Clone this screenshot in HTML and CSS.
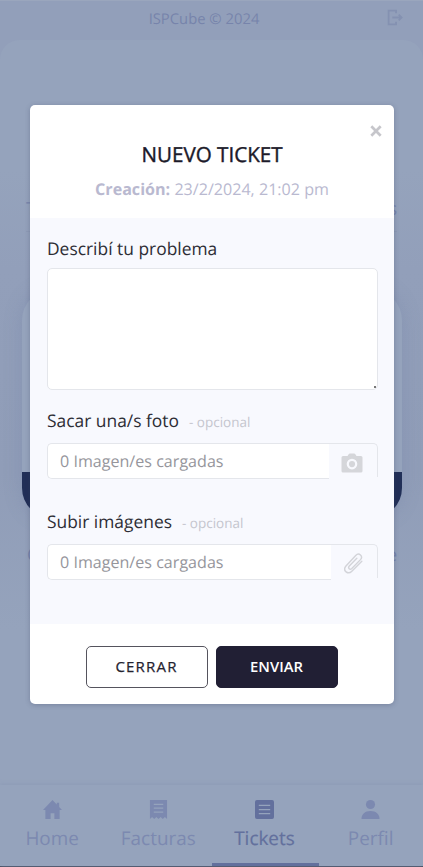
FILE: index.html
```
<!DOCTYPE html>
<html lang="es">
<head>
<meta charset="utf-8">
<title>Nuevo ticket</title>
<link rel="stylesheet" href="styles.css">
</head>
<body>
<div class="app">
  <header class="topbar">
    <span class="brand">ISPCube © 2024</span>
    <svg class="logout" viewBox="0 0 16 16"><path d="M7 1.500H2v13h5M7 1.500h2v2.500M7 14.500h2V12M5.500 8h8.500M11.500 5.300L14.200 8l-2.700 2.700" /></svg>
  </header>
  <main class="page">
    <div class="page-head"><span>T</span><span>s</span></div>
    <section class="summary"><div class="summary-foot"></div></section>
    <div class="page-sub"><span>C</span><span>e</span></div>
  </main>
  <nav class="tabs">
    <a class="tab"><svg viewBox="0 0 20 20"><path d="M10 0L0 10.500h2.500V20H8v-6h4v6h5.500v-9.500H20l-3-3.200V3h-2.500v1.700z"/></svg><span>Home</span></a>
    <a class="tab"><svg viewBox="0 0 20 20"><path fill-rule="evenodd" d="M1 0h18v20l-2.250-2-2.250 2-2.250-2L10 20l-2.250-2-2.250 2-2.250-2L1 20zM5 4v1.300h10V4zM5 8v1.300h10V8zM5 12v1.300h10V12z"/></svg><span>Facturas</span></a>
    <a class="tab active"><svg viewBox="0 0 20 20"><path fill-rule="evenodd" d="M2 0h16a2 2 0 012 2v16a2 2 0 01-2 2H2a2 2 0 01-2-2V2a2 2 0 012-2zM4 5v1.300h12V5zM4 9.400v1.300h12V9.400zM4 13.800v1.300h12v-1.300z"/></svg><span>Tickets</span></a>
    <a class="tab"><svg viewBox="0 0 20 20"><circle cx="10" cy="4.800" r="4.800"/><path d="M.5 20c0-5 3.500-8.500 9.500-8.500s9.500 3.500 9.500 8.500z"/></svg><span>Perfil</span></a>
  </nav>
</div>

<div class="modal">
  <header class="modal-head">
    <svg class="close" viewBox="0 0 12 12"><path d="M1.300 1.300l9.400 9.400M10.700 1.300l-9.400 9.400"/></svg>
    <h1 class="title">NUEVO TICKET</h1>
    <p class="created"><b>Creación:</b> 23/2/2024, 21:02 pm</p>
  </header>
  <div class="modal-body">
    <label class="label">Describí tu problema</label>
    <div class="textarea"><i class="grip"></i></div>
    <div class="label photo"><span>Sacar una/s foto</span><small>- opcional</small></div>
    <div class="upload">
      <div class="value">0 Imagen/es cargadas</div>
      <div class="pick"><svg class="camera" viewBox="0 0 22 20"><path fill-rule="evenodd" d="M7.500 1.500Q8 .5 9 .5h4q1 0 1.500 1L15.500 3H20q1.500 0 1.500 1.500v13.500q0 1.500-1.500 1.500H2Q.5 19.500.5 18V4.500Q.5 3 2 3h4.500zM11 5.800a5.300 5.300 0 100 10.600 5.300 5.300 0 000-10.600zm0 2.200a3.100 3.100 0 110 6.200A3.100 3.100 0 0111 8z"/></svg></div>
    </div>
    <div class="label images"><span>Subir imágenes</span><small>- opcional</small></div>
    <div class="upload files">
      <div class="value">0 Imagen/es cargadas</div>
      <div class="pick"><svg class="clip" viewBox="2 1 17 19"><path d="M18 8.500L9 17.500c-3.500 3.500-8.500-.5-5.500-4.500L12.500 3.200c3-3 7 .6 4.300 3.800l-7.800 8c-1.800 1.700-3.900-.5-2.300-2.200l6.800-7"/></svg></div>
    </div>
  </div>
  <footer class="modal-foot">
    <button class="btn outline">CERRAR</button>
    <button class="btn solid">ENVIAR</button>
  </footer>
</div>
</body>
</html>
```
FILE: styles.css
```
* { box-sizing: border-box; }
body {
  margin: 0;
  width: 423px;
  height: 867px;
  overflow: hidden;
  font-family: "Open Sans", "Noto Sans", sans-serif;
  text-rendering: geometricPrecision;
  background: #929fba;
}
.app {
  height: 867px;
  display: flex;
  flex-direction: column;
  border-bottom: 1px solid #41495d;
  color: #7784ab;
}
.topbar {
  flex: 0 0 40px;
  display: grid;
  grid-template-columns: 1fr auto 1fr;
  align-items: center;
  padding: 0 19px;
  border-top: 1px solid #9aa6bd;
}
.brand { grid-column: 2; font-size: 14.8px; line-height: 20px; margin: 0 15px 3px 0; }
.logout {
  justify-self: end;
  width: 18px;
  height: 17px;
  margin-bottom: 6px;
  fill: none;
  stroke: #8491b1;
  stroke-width: 1.7;
}
.page {
  flex: 1;
  display: flex;
  flex-direction: column;
  background: linear-gradient(#95a3bc 0, #95a3bc 130px, #929fba 230px, #909db8 430px, #95a3bc 590px);
  border-radius: 20px 20px 0 0;
}
.page-head, .page-sub { display: flex; justify-content: space-between; font-size: 18px; line-height: 26px; }
.page-head { margin: 156px 26px 0; padding-bottom: 9px; border-bottom: 1px solid #8d9ab5; }
.summary {
  height: 228px;
  margin: 58px 21px 0 22px;
  border-radius: 30px;
  overflow: hidden;
  display: flex;
  align-items: flex-end;
  background: #95a3bc;
  box-shadow: 0 0 18px rgba(110, 126, 163, .3);
}
.summary-foot { flex: 1; height: 46px; background: #212f57; }
.page-sub { margin: 24px 26px 0 27px; }
.tabs {
  flex: 0 0 81px;
  display: grid;
  grid-template-columns: repeat(4, 106.2px);
  background: #95a3bc;
  box-shadow: 0 -1px 4px #8d9ab6;
}
.tab {
  display: flex;
  flex-direction: column;
  align-items: center;
  padding: 15px 2px 0 0;
  gap: 6px;
  font-size: 18.9px;
  line-height: 26px;
  color: #7c89b0;
  border-bottom: 3px solid transparent;
}
.tab svg { width: 19px; height: 19px; flex: none; fill: currentColor; }
.tab.active { color: #63709d; border-color: #63709d; }
.tab.active span { -webkit-text-stroke: .2px #63709d; }

.modal {
  position: absolute;
  left: 30px;
  top: 105px;
  width: 364px;
  height: 599px;
  display: flex;
  flex-direction: column;
  background: #fff;
  border-radius: 5px;
  overflow: hidden;
  box-shadow: 0 1px 5px rgba(50, 60, 90, .3);
}
.modal-head { height: 113px; display: flex; flex-direction: column; align-items: center; }
.close {
  align-self: flex-end;
  width: 12px;
  height: 12px;
  margin: 20px 12px 0 0;
  stroke: #c6c6cb;
  stroke-width: 2.7;
}
.title { margin: 3px 0 0; font-size: 20.6px; line-height: 30px; font-weight: 400; -webkit-text-stroke: .4px #1c1a2a; color: #1c1a2a; white-space: nowrap; }
.created { margin: 7px 0 0; font-size: 16.1px; line-height: 24px; color: #b9b9d0; white-space: nowrap; }
.modal-body {
  height: 406px;
  padding: 19px 16px 0 17px;
  background: #f8f9fe;
  display: flex;
  flex-direction: column;
}
.label { font-size: 17.4px; line-height: 25px; color: #2d2d35; white-space: nowrap; }
.label small { font-size: 13.5px; color: #c5c6ce; margin-left: 10px; }
.textarea {
  height: 122px;
  margin-top: 6px;
  background: #fff;
  border: 1px solid #e4e6eb;
  border-radius: 5px;
  display: flex;
  align-items: flex-end;
  justify-content: flex-end;
}
.grip { width: 2px; height: 2px; background: #777; margin: 0 1px 1px 0; }
.photo { margin-top: 19px; }
.images { margin-top: 31px; }
.upload { height: 36px; margin-top: 8px; display: flex; }
.value {
  width: 282px;
  padding-left: 12px;
  font-size: 16.1px;
  line-height: 35px;
  color: #96969c;
  white-space: nowrap;
  background: #fff;
  border: 1px solid #e4e6eb;
  border-right: 0;
  border-radius: 5px 0 0 5px;
}
.files .value { width: 284px; }
.pick {
  flex: 1;
  height: 34px;
  display: flex;
  align-items: center;
  justify-content: center;
  border: 1px solid #e4e6eb;
  border-width: 1px 1px 0 0;
  border-radius: 0 5px 0 0;
}
.camera { width: 22px; height: 20px; margin: 4px 2px 0 0; fill: #d5d6da; }
.clip { width: 19px; height: 21px; margin: 4px 2px 0 0; fill: none; stroke: #d3d4d9; stroke-width: 1.3; stroke-linecap: round; }
.modal-foot { height: 80px; display: flex; gap: 8px; justify-content: center; padding: 22px 1px 0 0; }
.btn {
  width: 122px;
  height: 42px;
  padding: 0 0 2px;
  border-radius: 5px;
  font: 400 15px/38px "Open Sans", "Noto Sans", sans-serif;
  border: 1px solid #55545d;
}
.outline { background: #fff; color: #24222f; letter-spacing: 1.2px; -webkit-text-stroke: .25px #24222f; }
.solid { background: #211f34; border-color: #211f34; color: #fff; font-weight: 600; font-size: 14.8px; }
```
